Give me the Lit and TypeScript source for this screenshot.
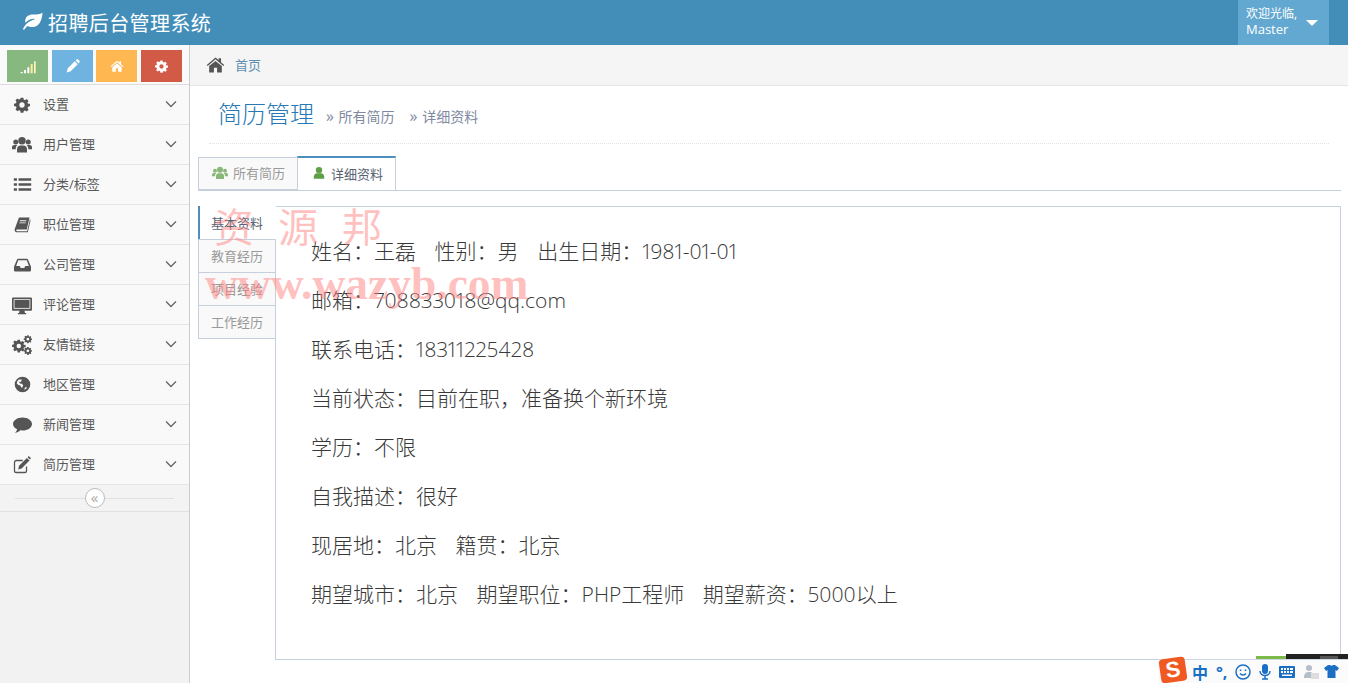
import { LitElement, html, css, svg } from "lit";
import { customElement } from "lit/decorators.js";

const ic = (d: any, size = 18, vb = "0 0 24 24") =>
  html`<svg width=${size} height=${size} viewBox=${vb} fill="currentColor">${d}</svg>`;

const gear = svg`<path fill-rule="evenodd" d="M10 1h4l.6 2.900 1.900.8 2.500-1.600 2.800 2.800-1.600 2.500.8 1.900L24 10v4l-2.900.6-.8 1.900 1.600 2.500-2.800 2.800-2.500-1.600-1.900.8L14 23.500h-4l-.6-3-1.900-.8L5 21.300 2.200 18.500l1.600-2.500-.8-1.900L0 13.500v-3.500l3-.6.8-1.900L2.200 5 5 2.200l2.500 1.600 1.900-.8zM12 8a4 4 0 1 0 0 8 4 4 0 0 0 0-8z"/>`;
const users = svg`<circle cx="12" cy="7" r="4.500"/><circle cx="4.500" cy="8.500" r="3"/><circle cx="19.500" cy="8.500" r="3"/><path d="M6 21v-4.500c0-2.500 2-4 4-4h4c2 0 4 1.500 4 4V21z"/><path d="M0 17v-2.500C0 12.800 1.300 12 3 12h3.500c-1.300 1-2 2.500-2 4v1zM24 17v-2.500c0-1.700-1.300-2.500-3-2.500h-3.500c1.300 1 2 2.500 2 4v1z"/>`;
const list = svg`<path d="M1 4h4v3.200H1zM7 4h16v3.200H7zM1 10.400h4v3.200H1zM7 10.400h16v3.200H7zM1 16.800h4V20H1zM7 16.800h16V20H7z"/>`;
const book = svg`<path d="M7 2h15l-4 17H3.500c-.8 2 .2 2.500 1.500 2.500h13.500L22.500 5l1 .8L19.500 23H4c-2.500 0-3.500-2-3-4.500z"/><path fill="#f9f9f9" d="M8.500 6h9l-.4 1.400h-9zM7.800 9h9l-.4 1.400h-9z"/>`;
const inbox = svg`<path fill-rule="evenodd" d="M6 4h12c1 0 1.500.5 2 1.500L24 15v5c0 1-1 2-2 2H2c-1 0-2-1-2-2v-5L4 5.500C4.500 4.500 5 4 6 4zm0 2L3 14h5l1.500 3h5l1.500-3h5L18 6z"/>`;
const desktop = svg`<path fill-rule="evenodd" d="M1.500 3h21c.8 0 1.500.7 1.500 1.500v13c0 .8-.7 1.500-1.500 1.500H15l.5 2.500h1.500V23H7v-1.500h1.500L9 19H1.500C.7 19 0 18.300 0 17.500v-13C0 3.700.7 3 1.500 3zM2 5v11.500h20V5z"/><rect x="3" y="6" width="18" height="9.500"/>`;
const cogs = svg`<g transform="translate(0 5) scale(.68)">${gear}</g><g transform="translate(14 0) scale(.42)">${gear}</g><g transform="translate(14 14) scale(.42)">${gear}</g>`;
const globe = svg`<path fill-rule="evenodd" d="M12 1a11 11 0 1 1 0 22 11 11 0 0 1 0-22zm-5 4c-2 1.500-3 3.500-3 6l3 2 2 .5 1.500 3 1.500-.5 1-3-2-2-2.500-.5L7 8.500l3-.5 1-3zm9 11-2 3 3-.5 1.500-2.500z"/>`;
const comment = svg`<path d="M12 3c6.600 0 12 3.700 12 8.300s-5.400 8.300-12 8.300c-1 0-1.800-.1-2.700-.2C7.700 21 5 22.500 2.500 22.800c1-1 2.300-2.800 2.700-4.700C2 16.600 0 14.100 0 11.300 0 6.700 5.400 3 12 3z"/>`;
const edit = svg`<path fill="none" stroke="currentColor" stroke-width="1.700" d="M18 14v5.500a2.500 2.500 0 0 1-2.500 2.500h-11A2.500 2.500 0 0 1 2 19.500v-11A2.500 2.500 0 0 1 4.500 6H13"/><path d="M8 13 18.500 2.500l3.500 3.500L11.500 16.500 7 18z"/><path d="M19.500 1.500 21 0l3 3-1.500 1.500z"/>`;
const chart = svg`<path d="M1 21h3v2H1zM6 18h3v5H6zM11 14h3v9h-3z" fill="#fff"/><path d="M16 9h3v14h-3z" fill="#ffee99"/><path d="M21 5h2.500v18H21z" fill="#fff6c0"/>`;
const pencil = svg`<path d="M3 16 15 4l5 5L8 21l-7 2zM16.500 2.500 18 1c.8-.8 2-.8 2.800 0l2.200 2.200c.8.8.8 2 0 2.800l-1.500 1.500z"/>`;
const home = svg`<path d="M12 3 1 12.500l1.200 1.400L12 5.500l9.800 8.400 1.200-1.400-4-3.500V4h-3v2.300z"/><path d="M12 7.500 4 14v8h6v-6h4v6h6v-8z"/>`;
const leaf = svg`<path d="M23.500 2C23 9 21 14 17.500 16.500 13.500 19.300 9 18.500 6.500 17 5 18 3.500 19.500 2.500 21.500L1 21c1-3 3-5.800 6-8 3-2 5.500-3 8-4-4-.5-8 1-11 4.500C3 9 5 5.500 9 4.500c5-1.300 10 .5 14.500-2.500z"/>`;

const NAV: [string, any, number][] = [
  ["设置", gear, 16],
  ["用户管理", users, 20],
  ["分类/标签", list, 19],
  ["职位管理", book, 17],
  ["公司管理", inbox, 17],
  ["评论管理", desktop, 20],
  ["友情链接", cogs, 20],
  ["地区管理", globe, 17],
  ["新闻管理", comment, 19],
  ["简历管理", edit, 18],
];

const LINES = [
  ["姓名：王磊", "性别：男", "出生日期：1981-01-01"],
  ["邮箱：708833018@qq.com"],
  ["联系电话：18311225428"],
  ["当前状态：目前在职，准备换个新环境"],
  ["学历：不限"],
  ["自我描述：很好"],
  ["现居地：北京", "籍贯：北京"],
  ["期望城市：北京", "期望职位：PHP工程师", "期望薪资：5000以上"],
];

@customElement("app-root")
export class AppRoot extends LitElement {
  static styles = css`
    :host {
      display: block;
      width: 1348px;
      height: 683px;
      position: relative;
      overflow: hidden;
      background: #fff;
      font-family: "Open Sans", "Noto Sans CJK SC", sans-serif;
      font-size: 13px;
      color: #393939;
    }
    .navbar {
      height: 45px;
      background: #438eb9;
      display: flex;
      justify-content: space-between;
      padding: 0 19px 0 22px;
      box-sizing: border-box;
      color: #fff;
    }
    .brand { display: flex; align-items: center; gap: 5px; font-size: 20px; letter-spacing: .4px; font-weight: 400; height: 45px; }
    .brand svg { margin-top: -2px; }
    .user {
      width: 91px;
      background: #62a8d1;
      box-sizing: border-box;
      padding: 6px 0 0 8px;
      font-size: 13px;
      line-height: 16px;
      position: relative;
    }
    .user b { font-weight: 400; font-size: 12px; display: block; line-height: 15px; }
    .user i {
      position: absolute; left: 68px; top: 20px;
      border: 6px solid transparent; border-top: 6px solid #fff; border-bottom: 0;
    }
    .main { display: flex; height: 638px; }
    .side { width: 190px; flex: none; box-sizing: border-box; background: #f2f2f2; border-right: 1px solid #ccc; }
    .short { height: 40px; padding-top: 5px; box-sizing: border-box; display: flex; padding-left: 7px; gap: 4px; border-bottom: 1px solid #ddd; background: #fafafa; }
    .short div { width: 41px; height: 32px; display: flex; align-items: center; justify-content: center; color: #fff; }
    .short div:nth-child(1) { background: #87b87f; }
    .short div:nth-child(2) { background: #6fb3e0; }
    .short div:nth-child(3) { background: #ffb752; margin-left: -1px; }
    .short div:nth-child(4) { background: #d15b47; }
    .item {
      height: 40px;
      box-sizing: border-box;
      background: #f9f9f9;
      border-bottom: 1px solid #e5e5e5;
      display: flex;
      align-items: center;
      color: #585858;
      padding-left: 12px;
    }
    .item .ico { width: 20px; height: 20px; display: flex; align-items: center; justify-content: center; color: #555; margin-right: 11px; }
    .item .lbl { flex: 1; padding-bottom: 2px; }
    .chev { margin-right: 12px; margin-top: -2px; color: #666; }
    .collapse { height: 27px; box-sizing: border-box; border-bottom: 1px solid #e0e0e0; background: #f3f3f3; display: flex; align-items: center; justify-content: center; position: relative; }
    .collapse::before { content: ""; position: absolute; left: 15px; right: 15px; top: 13px; height: 1px; background: #e0e0e0; }
    .collapse span { position: relative; width: 20px; height: 20px; box-sizing: border-box; border-radius: 50%; background: #fff; border: 1px solid #bbb; color: #aaa; display: flex; align-items: center; justify-content: center; font-size: 15px; line-height: 16px; padding-bottom: 2px; }
    .content { flex: 1; min-width: 0; }
    .crumb { height: 41px; box-sizing: border-box; background: #f5f5f5; border-bottom: 1px solid #e5e5e5; display: flex; align-items: center; padding-left: 16px; gap: 10px; color: #555; }
    .crumb svg { margin-top: -1px; }
    .crumb a { color: #5e8fb0; font-size: 13px; margin-top: -1px; }
    .head { margin: 0 19px 0 19px; height: 58px; box-sizing: border-box; border-bottom: 1px dotted #e2e2e2; padding: 11px 0 0 9px; display: flex; align-items: baseline; }
    .head h1 { margin: 0 12px 0 0; font-size: 24px; line-height: 34px; font-weight: 300; color: #2679b5; }
    .head small { font-size: 14px; color: #8089a0; margin-right: 15px; font-weight: 400; position: relative; top: -1px; }
    .head small em { font-style: normal; font-size: 16px; margin-right: 1px; }
    .tabs { margin: 13px 7px 0 8px; height: 34px; box-sizing: border-box; border-bottom: 1px solid #c5d0dc; display: flex; }
    .tab { height: 33px; box-sizing: border-box; border: 1px solid #c5d0dc; background: #f9f9f9; color: #999; display: flex; align-items: center; gap: 5px; padding: 0 12px 2px 13px; }
    .tab + .tab { margin-left: -1px; }
    .tab.on { height: 34px; background: #fff; border-top: 2px solid #4c8fbd; border-bottom: 0; color: #576373; margin-top: -1px; padding-right: 12px; padding-left: 14px; position: relative; z-index: 1; }
    .tab .g { color: #8ab878; display: flex; }
    .tab.on .g { color: #5f9e44; }
    .body { margin: 15px 7px 0 8px; display: flex; height: 454px; }
    .vtabs { width: 78px; flex: none; margin-right: -1px; position: relative; z-index: 1; }
    .vt { height: 34px; box-sizing: border-box; border: 1px solid #c5d0dc; margin-top: -1px; background: #f9f9f9; color: #999; font-size: 13px; display: flex; align-items: center; padding: 0 0 2px 12px; }
    .vt:first-child { margin-top: 0; height: 34px; background: #fff; color: #576373; border: 0; border-left: 2px solid #4c8fbd; padding-left: 11px; }
    .panel { flex: 1; border: 1px solid #c5d0dc; box-sizing: border-box; padding: 20px 0 0 35px; }
    .panel p { margin: 0; height: 49px; line-height: 49px; font-size: 21px; font-weight: 300; color: #393939; display: flex; gap: 18.6px; white-space: nowrap; font-variant-numeric: proportional-nums; }
    .wm { position: absolute; left: 0; top: 0; z-index: 5; pointer-events: none; color: rgba(255, 130, 130, .5); }
    .wm1 { position: absolute; left: 205px; top: 259px; font-size: 45.5px; line-height: 50px; font-weight: 700; font-family: "Liberation Serif", serif; white-space: nowrap; }
    .wm2 { position: absolute; left: 214px; top: 197px; font-size: 40px; line-height: 56px; font-weight: 400; white-space: nowrap; font-family: "Noto Sans CJK SC", sans-serif; display: flex; gap: 24px; }
    .ime { position: absolute; left: 1158px; top: 659px; width: 190px; height: 24px; background: #fbfbfb; display: flex; align-items: center; color: #1a6fc4; font-size: 16px; font-weight: 700; padding-left: 34px; box-sizing: border-box; border-top: 1px solid #cfd8e4; }
    .ime .a { margin-left: 8px; font-size: 16px; }
    .ime svg { margin-left: 8px; flex: none; }
    .logo { position: absolute; left: 2px; top: -2px; width: 26px; height: 24px; background: #f05a22; border-radius: 4px; transform: rotate(-8deg); color: #fff; font-size: 22px; line-height: 24px; text-align: center; font-weight: 700; font-family: "Liberation Sans", sans-serif; }
    .strip { position: absolute; height: 5px; }
    .strip.g { left: 1256px; top: 656px; height: 3px; width: 30px; background: #7cbb4a; }
    .strip.k { left: 1286px; top: 654px; width: 62px; background: #222; }
    .strip.d { left: 1320px; top: 656px; width: 18px; height: 3px; background: #555; }
  `;

  render() {
    return html`
      <div class="navbar">
        <div class="brand">${ic(leaf, 21)}<span>招聘后台管理系统</span></div>
        <div class="user"><b>欢迎光临,</b>Master<i></i></div>
      </div>
      <div class="main">
        <div class="side">
          <div class="short">
            <div>${ic(chart, 16)}</div>
            <div>${ic(pencil, 14)}</div>
            <div>${ic(home, 14)}</div>
            <div>${ic(gear, 13)}</div>
          </div>
          ${NAV.map(
            ([t, d, s]) => html`<div class="item">
              <span class="ico">${ic(d, s)}</span><span class="lbl">${t}</span>
              <svg class="chev" width="12" height="8" viewBox="0 0 12 8" fill="none" stroke="currentColor" stroke-width="1.300"><path d="M1 1.500 6 6.500 11 1.500"/></svg>
            </div>`
          )}
          <div class="collapse"><span>«</span></div>
        </div>
        <div class="content">
          <div class="crumb">${ic(home, 19)}<a>首页</a></div>
          <div class="head">
            <h1>简历管理</h1><small><em>»</em> 所有简历</small><small><em>»</em> 详细资料</small>
          </div>
          <div class="tabs">
            <div class="tab"><span class="g">${ic(users, 16)}</span>所有简历</div>
            <div class="tab on"><span class="g">${ic(svg`<circle cx="12" cy="7" r="5.500"/><path d="M3 22v-3c0-4 3-6.500 5-6.500h8c2 0 5 2.500 5 6.500v3z"/>`, 14)}</span>详细资料</div>
          </div>
          <div class="body">
            <div class="vtabs">
              <div class="vt">基本资料</div>
              <div class="vt">教育经历</div>
              <div class="vt">项目经验</div>
              <div class="vt">工作经历</div>
            </div>
            <div class="panel">
              ${LINES.map((l) => html`<p>${l.map((s) => html`<span>${s}</span>`)}</p>`)}
            </div>
          </div>
        </div>
      </div>
      <div class="wm">
        <div class="wm2"><span>资</span><span>源</span><span>邦</span></div>
        <div class="wm1">www.wazyb.com</div>
      </div>
      <div class="strip g"></div>
      <div class="strip k"></div>
      <div class="strip d"></div>
      <div class="ime">
        <div class="logo">S</div>
        <span>中</span><span class="a">°,</span>
        <svg width="16" height="16" viewBox="0 0 16 16" fill="none" stroke="currentColor" stroke-width="1.500"><circle cx="8" cy="8" r="7"/><path d="M5 9.500c1.500 2 4.500 2 6 0M5.500 5.500v1.500M10.500 5.500v1.500"/></svg>
        <svg width="12" height="16" viewBox="0 0 12 16" fill="currentColor"><rect x="3" y="0" width="6" height="10" rx="3"/><path d="M1 7c0 6 10 6 10 0M6 12v3M3 15h6" fill="none" stroke="currentColor" stroke-width="1.500"/></svg>
        <svg width="16" height="12" viewBox="0 0 16 12" fill="currentColor"><path fill-rule="evenodd" d="M1 0h14a1 1 0 0 1 1 1v10a1 1 0 0 1-1 1H1a1 1 0 0 1-1-1V1a1 1 0 0 1 1-1zm1 2v2h2V2zm3 0v2h2V2zm3 0v2h2V2zm3 0v2h3V2zM2 5v2h2V5zm3 0v2h2V5zm3 0v2h2V5zm3 0v2h3V5zM3 8.500V10h10V8.500z"/></svg>
        <svg width="16" height="16" viewBox="0 0 16 16" fill="#b5bfc9"><circle cx="6" cy="4" r="3"/><path d="M1 14c0-5 2-6 5-6s5 1 5 6z"/><rect x="8" y="9" width="8" height="6" fill="#ddd"/></svg>
        <svg width="15" height="15" viewBox="0 0 15 15" fill="currentColor" style="margin-left:5px"><path d="M4 1h2c.5 1 2.500 1 3 0h2l4 3-2 3-1.500-1v8H3.500V6L2 7 0 4z"/></svg>
      </div>
    `;
  }
}
